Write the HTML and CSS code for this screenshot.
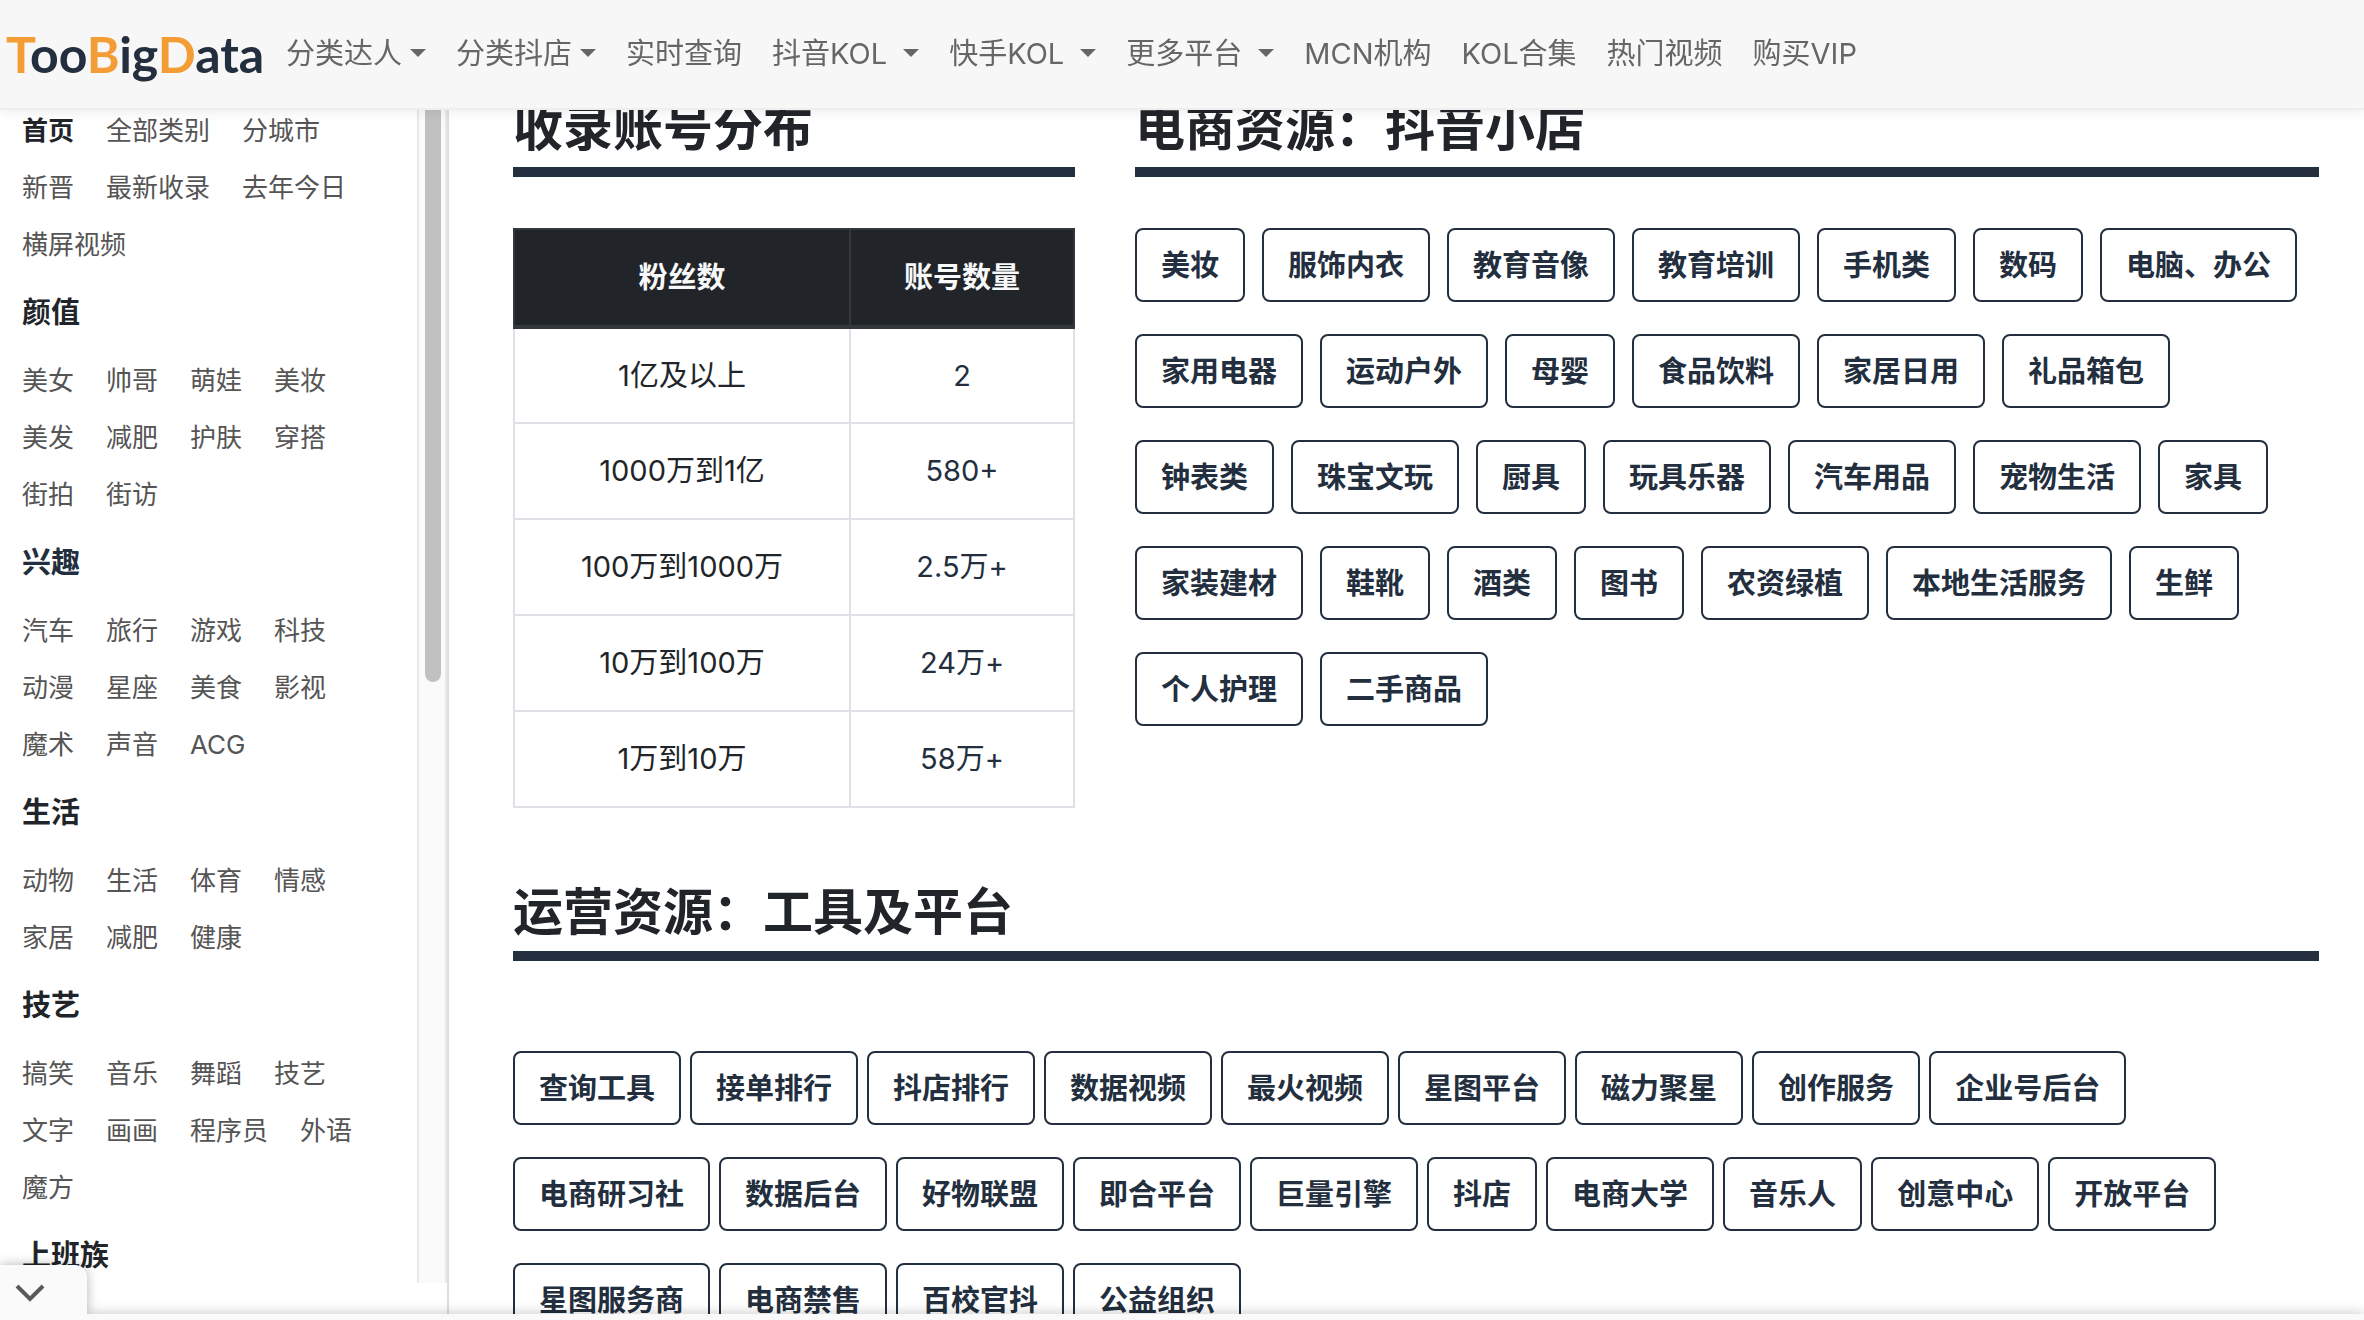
FILE: index.html
```html
<!DOCTYPE html>
<html lang="zh-CN">
<head>
<meta charset="utf-8">
<title>TooBigData</title>
<link rel="stylesheet" href="styles.css">
</head>
<body>
<header class="navbar">
  <a class="logo" href="#"><span class="logo-accent">T</span>oo<span class="logo-accent">B</span>ig<span class="logo-accent">D</span>ata</a>
  <nav class="nav-links">
    <a class="dropdown" href="#">分类达人</a>
    <a class="dropdown" href="#">分类抖店</a>
    <a href="#">实时查询</a>
    <a class="dropdown spaced" href="#">抖音KOL</a>
    <a class="dropdown spaced" href="#">快手KOL</a>
    <a class="dropdown spaced" href="#">更多平台</a>
    <a href="#">MCN机构</a>
    <a href="#">KOL合集</a>
    <a href="#">热门视频</a>
    <a href="#">购买VIP</a>
  </nav>
</header>

<div class="layout">
  <aside class="sidebar">
    <div class="sidebar-scroll">
      <nav class="menu">
        <div class="links"><a class="active" href="#">首页</a><a href="#">全部类别</a><a href="#">分城市</a><a href="#">新晋</a><a href="#">最新收录</a><a href="#">去年今日</a><a href="#">横屏视频</a></div>
        <h3>颜值</h3>
        <div class="links"><a href="#">美女</a><a href="#">帅哥</a><a href="#">萌娃</a><a href="#">美妆</a><a href="#">美发</a><a href="#">减肥</a><a href="#">护肤</a><a href="#">穿搭</a><a href="#">街拍</a><a href="#">街访</a></div>
        <h3><a href="#">兴趣</a></h3>
        <div class="links"><a href="#">汽车</a><a href="#">旅行</a><a href="#">游戏</a><a href="#">科技</a><a href="#">动漫</a><a href="#">星座</a><a href="#">美食</a><a href="#">影视</a><a href="#">魔术</a><a href="#">声音</a><a href="#">ACG</a></div>
        <h3>生活</h3>
        <div class="links"><a href="#">动物</a><a href="#">生活</a><a href="#">体育</a><a href="#">情感</a><a href="#">家居</a><a href="#">减肥</a><a href="#">健康</a></div>
        <h3>技艺</h3>
        <div class="links"><a href="#">搞笑</a><a href="#">音乐</a><a href="#">舞蹈</a><a href="#">技艺</a><a href="#">文字</a><a href="#">画画</a><a href="#">程序员</a><a href="#">外语</a><a href="#">魔方</a></div>
        <h3>上班族</h3>
      </nav>
      <div class="track"><div class="thumb"></div></div>
    </div>
  </aside>

  <main class="content">
    <section class="accounts">
      <h2>收录账号分布</h2>
      <table>
        <thead><tr><th scope="col">粉丝数</th><th scope="col">账号数量</th></tr></thead>
        <tbody>
          <tr><td>1亿及以上</td><td><a href="#">2</a></td></tr>
          <tr><td>1000万到1亿</td><td><a href="#">580+</a></td></tr>
          <tr><td>100万到1000万</td><td><a href="#">2.5万+</a></td></tr>
          <tr><td>10万到100万</td><td><a href="#">24万+</a></td></tr>
          <tr><td>1万到10万</td><td><a href="#">58万+</a></td></tr>
        </tbody>
      </table>
    </section>

    <section class="shops">
      <h2>电商资源：抖音小店</h2>
      <div class="tags">
        <button>美妆</button><button>服饰内衣</button><button>教育音像</button><button>教育培训</button><button>手机类</button><button>数码</button><button>电脑、办公</button>
        <button>家用电器</button><button>运动户外</button><button>母婴</button><button>食品饮料</button><button>家居日用</button><button>礼品箱包</button>
        <button>钟表类</button><button>珠宝文玩</button><button>厨具</button><button>玩具乐器</button><button>汽车用品</button><button>宠物生活</button><button>家具</button>
        <button>家装建材</button><button>鞋靴</button><button>酒类</button><button>图书</button><button>农资绿植</button><button>本地生活服务</button><button>生鲜</button>
        <button>个人护理</button><button>二手商品</button>
      </div>
    </section>

    <section class="tools">
      <h2>运营资源：工具及平台</h2>
      <div class="tags compact">
        <button>查询工具</button><button>接单排行</button><button>抖店排行</button><button>数据视频</button><button>最火视频</button><button>星图平台</button><button>磁力聚星</button><button>创作服务</button><button>企业号后台</button>
        <button>电商研习社</button><button>数据后台</button><button>好物联盟</button><button>即合平台</button><button>巨量引擎</button><button>抖店</button><button>电商大学</button><button>音乐人</button><button>创意中心</button><button>开放平台</button>
        <button>星图服务商</button><button>电商禁售</button><button>百校官抖</button><button>公益组织</button>
      </div>
    </section>
  </main>
</div>

<div class="drawer">
  <button class="drawer-toggle" aria-label="展开">
    <svg width="30" height="20" viewBox="0 0 30 20" aria-hidden="true"><path d="M2 2 15 15 28 2" fill="none" stroke="#5a5a5a" stroke-width="4"/></svg>
  </button>
  <div class="drawer-edge"></div>
</div>
</body>
</html>
```

FILE: styles.css
```css
* { box-sizing: border-box; }

body {
  margin: 0;
  height: 100vh;
  overflow: hidden;
  background: #fff;
  color: #212529;
  font-family: Inter, "Noto Sans CJK SC", sans-serif;
  font-size: 29px;
  line-height: 44px;
}

a { color: inherit; text-decoration: none; }

/* top bar */
.navbar {
  position: fixed;
  inset: 0 0 auto 0;
  z-index: 10;
  display: flex;
  align-items: center;
  height: 110px;
  padding: 0 6px;
  background: #f7f7f7;
  border-bottom: 2px solid #eee;
  box-shadow: 0 2px 12px rgba(0, 0, 0, .08);
}

.logo {
  width: 265px;
  color: #232f3e;
  font-family: Lato, sans-serif;
  font-size: 50px;
  font-weight: 700;
}

.logo-accent { color: #f49d37; }

.nav-links { display: flex; color: #666; }
.nav-links a { padding: 0 15px; white-space: nowrap; }

.dropdown::after {
  content: "";
  display: inline-block;
  margin-left: 8px;
  vertical-align: 7px;
  border: 8px solid transparent;
  border-top-color: currentColor;
  border-bottom: 0;
}

.spaced::after { margin-left: 16px; }

/* page columns */
.layout {
  display: grid;
  grid-template-columns: 449px 1fr;
  height: 100vh;
}

.sidebar {
  height: 100vh;
  border-right: 2px solid #dedede;
  overflow: hidden;
}

.sidebar-scroll {
  display: flex;
  height: calc(100vh - 37px);
  overflow: hidden;
}

.menu { flex: 1; padding: 102px 22px 0; }

.links {
  display: flex;
  flex-wrap: wrap;
  column-gap: 32px;
  color: #555;
  font-size: 26px;
  line-height: 57px;
}

.links .active { color: #212529; font-weight: 700; }

.menu h3 {
  margin: 0;
  font-size: 29px;
  line-height: 79px;
}

.menu h3 a { color: #232f3e; }

.track {
  width: 30px;
  padding: 110px 4px 0 6px;
  background: #fafafa;
  border: solid #e8e8e8;
  border-width: 0 2px;
}

.thumb {
  width: 16px;
  height: 572px;
  background: #c1c1c1;
  border-radius: 0 0 8px 8px;
}

/* content */
.content {
  display: grid;
  grid-template-columns: repeat(12, 1fr);
  column-gap: 60px;
  row-gap: 68px;
  align-content: start;
  padding: 92px 45px 0 64px;
  overflow: hidden;
}

.accounts { grid-column: span 4; }
.shops { grid-column: span 8; }
.tools { grid-column: span 12; }

h2 {
  margin: 0 0 51px;
  padding-bottom: 3px;
  border-bottom: 10px solid #232f3e;
  font-size: 50px;
  font-weight: 600;
  line-height: 72px;
}

.tools h2 { margin-bottom: 90px; }

table {
  width: 100%;
  border-collapse: collapse;
  text-align: center;
}

th, td {
  height: 96px;
  padding: 0 24px;
  border: 2px solid #dee2e6;
}

th {
  height: 98px;
  background: #212529;
  color: #f8f9fa;
  border-color: #32383e;
  font-weight: 700;
}

th:first-child { width: 60%; }
thead th { border-bottom-width: 4px; }
td a { color: #232f3e; }

.tags {
  display: flex;
  flex-wrap: wrap;
  gap: 32px 17px;
}

.compact { column-gap: 9px; }

.tags button {
  height: 74px;
  padding: 2px 24px 0;
  background: #fff;
  border: 2px solid #232f3e;
  border-radius: 8px;
  color: #232f3e;
  font: inherit;
  font-weight: 600;
  white-space: nowrap;
}

/* pull-up drawer at the window's foot */
.drawer {
  position: fixed;
  inset: auto 0 0 0;
  z-index: 20;
  filter: drop-shadow(0 0 6px rgba(0, 0, 0, .3));
}

.drawer-toggle {
  display: block;
  width: 87px;
  height: 49px;
  padding: 8px 0 0 15px;
  background: #fafafa;
  border: 0;
  border-radius: 0 12px 0 0;
  text-align: left;
}

.drawer-toggle svg { display: block; }
.drawer-edge { height: 6px; background: #fafafa; }
```
